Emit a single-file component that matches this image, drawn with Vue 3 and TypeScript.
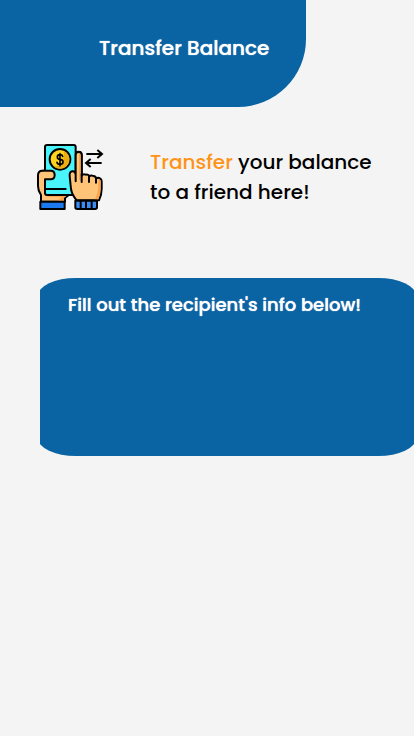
<script setup lang="ts">
const title: string = 'Transfer Balance'
const prompt: string = "Fill out the recipient's info below!"
</script>

<template>
  <div class="page">
    <header class="banner">
      <h1 class="title">{{ title }}</h1>
    </header>
    <main>
      <section class="intro">
        <svg class="icon" viewBox="0 0 240 240" aria-hidden="true">
          <g stroke="#000" stroke-width="6" stroke-linejoin="round" stroke-linecap="round">
            <path fill="#ffc477" d="M45 98h-8q-13 0-13 14v32q0 14 9 27v20h72v-11l15-12-45-20z" />
            <path fill="#fba34d" stroke="none" d="M49 172q0 5 6 5h40l-12 12h19v-10l15-10z" />
            <path fill="#1c79ee" d="M31 191h73v22H31z" />
            <path fill="#fba34d" d="M137 47q1-6 9-6 9 0 9 9v74h-18z" />
            <path fill="#49f4fb" d="M51 21h80q6 0 6 6v138q0 6-6 6H51q-6 0-6-6V27q0-6 6-6z" />
            <path fill="#ffc477" stroke="none" d="M38 98h24q12 0 12 13t-12 13H48v41H36z" />
            <path fill="none" d="M38 98h24q12 0 12 13t-12 13H45v41M49 153h58" />
            <circle cx="90" cy="64" r="31" fill="#ffd421" />
            <path fill="#ecae12" stroke="none" d="M90 92a28 28 0 0 0 11-54q5 43-29 48 8 6 18 6z" />
            <path fill="none" stroke-width="5" d="M98 55q-1-5-8-5-8 0-8 7t8 7q9 1 9 8t-9 7q-8 0-9-6M90 47v36" />
            <path fill="#ffc477" d="M137 130V51q0-9 8-9 10 0 10 10v61q4-6 12-3 9-2 11 5 5-5 12-1 8 0 8 8 6-5 12-1 5 3 5 9v22q0 18-8 35h-67q-14-16-17-34l-4-39q-1-13 8-14 8-1 10 9z" />
            <path fill="#fba34d" stroke="none" d="M205 125q7-3 7 5v22q0 17-7 32h-10q8-16 10-33zM147 45q5 1 5 7v74h-5z" />
            <path fill="none" d="M155 108v24m22-18v18m21-11v13" />
            <path fill="#3b8df6" d="M136 188h65v20q0 5-6 5h-53q-6 0-6-5z" />
            <path fill="none" d="M152 190v21m16-21v21m17-21v21" />
          </g>
          <path fill="none" stroke="#000" stroke-width="6" d="M169 48h46m-13-12 14 12-14 12M215 75h-46m13-12-14 12 14 12" />
        </svg>
        <p class="lead"><span class="accent">Transfer</span> your balance<br />to a friend here!</p>
      </section>
      <section class="card">
        <h2 class="prompt">{{ prompt }}</h2>
      </section>
    </main>
  </div>
</template>

<style>
body {
  margin: 0;
  background: #f4f4f4;
}
</style>

<style scoped>
.page {
  min-height: 100vh;
  background: #f4f4f4;
  color: #000;
  font-family: Poppins, Inter, "Liberation Sans", sans-serif;
}
.banner {
  box-sizing: border-box;
  width: 74%;
  padding: 33px 36px 44px 99px;
  border-bottom-right-radius: 68px;
  background: #0a63a2;
}
.title,
.prompt,
.lead {
  margin: 0;
  font-weight: 500;
  line-height: 30px;
  white-space: nowrap;
}
.title,
.prompt {
  color: #fff;
  text-shadow: 0 0 1px #fff;
}
.title {
  font-size: 20px;
}
.intro {
  display: flex;
  align-items: flex-start;
  gap: 40px;
  padding: 31px 30px 0;
}
.icon {
  flex: none;
  width: 80px;
  height: 80px;
}
.lead {
  padding-top: 9px;
  font-size: 20px;
}
.accent {
  color: #ff9318;
}
.card {
  position: relative;
  z-index: 0;
  box-sizing: border-box;
  min-height: 178px;
  margin: 60px 0 0 40px;
  padding: 12px 28px;
  overflow: hidden;
}
.card::before {
  content: "";
  position: absolute;
  z-index: -1;
  inset: 0 -2px;
  border-radius: 10%;
  background: #0a63a2;
}
.prompt {
  font-size: 18px;
}
</style>
